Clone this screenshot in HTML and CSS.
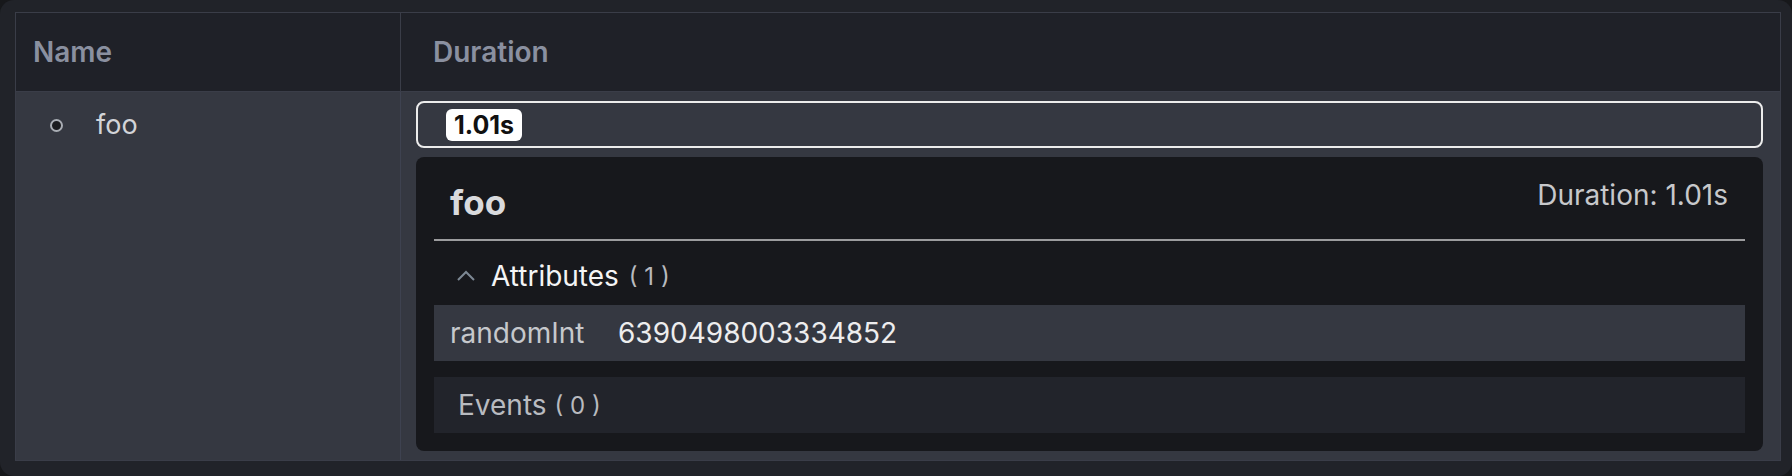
FILE: index.html
```html
<!DOCTYPE html>
<html>
<head>
<meta charset="utf-8">
<link rel="stylesheet" href="styles.css">
</head>
<body>
<div class="frame">
  <div class="table">
    <div class="thead">
      <div class="th th-name">Name</div>
      <div class="th th-dur">Duration</div>
    </div>
    <div class="trow">
      <div class="td td-name">
        <span class="dot"></span>
        <span class="span-name">foo</span>
      </div>
      <div class="td td-dur">
        <div class="bar">
          <span class="badge">1.01s</span>
        </div>
        <div class="panel">
          <div class="panel-head">
            <div class="panel-title">foo</div>
            <div class="panel-dur">Duration: 1.01s</div>
          </div>
          <div class="section-head">
            <svg class="caret" width="20" height="12" viewBox="0 0 20 12"><path d="M2 10 L10 2 L18 10" fill="none" stroke="#7d8894" stroke-width="2"/></svg>
            <span class="section-label">Attributes</span>
            <span class="count">( 1 )</span>
          </div>
          <div class="attr-row">
            <span class="attr-key">randomInt</span>
            <span class="attr-val">6390498003334852</span>
          </div>
          <div class="events-row">
            <span class="events-label">Events</span>
            <span class="count">( 0 )</span>
          </div>
        </div>
      </div>
    </div>
  </div>
</div>
</body>
</html>
```
FILE: styles.css
```css
* { box-sizing: border-box; }
html, body { margin: 0; padding: 0; }
body {
  background: #17181b;
  font-family: Inter, "Noto Sans", sans-serif;
  width: 1792px;
  height: 476px;
  overflow: hidden;
}
.frame {
  width: 1792px;
  height: 476px;
  background: #212329;
  border-radius: 14px;
  padding: 12px 11px 15px 15px;
}
.table {
  border: 1px solid #3a3d48;
  display: flex;
  flex-direction: column;
  height: 449px;
}
.thead {
  display: flex;
  height: 79px;
  background: #1f2128;
  border-bottom: 1px solid #3a3d48;
}
.th {
  display: flex;
  align-items: center;
  color: #8a90a0;
  font-weight: 600;
  font-size: 28px;
  padding-bottom: 1px;
}
.th-name {
  width: 385px;
  padding-left: 17px;
  border-right: 1px solid #3a3d48;
}
.th-dur {
  flex: 1;
  padding-left: 32px;
}
.trow {
  display: flex;
  flex: 1;
  background: #353841;
}
.td-name {
  width: 385px;
  border-right: 1px solid #3e4250;
  display: flex;
  align-items: flex-start;
  padding: 17px 0 0 34px;
  height: 100%;
}
.dot {
  width: 13px;
  height: 13px;
  border-radius: 50%;
  border: 2px solid #a9adb4;
  background: #1b1c20;
  margin-top: 10px;
  margin-right: 33px;
  flex: none;
}
.span-name {
  color: #d2d4d8;
  font-size: 27px;
  line-height: 32px;
}
.td-dur {
  flex: 1;
  padding: 9px 17px 9px 15px;
  display: flex;
  flex-direction: column;
  gap: 9px;
}
.bar {
  height: 47px;
  border: 2px solid #ececec;
  border-radius: 8px;
  display: flex;
  align-items: center;
  padding-left: 28px;
}
.badge {
  background: #ffffff;
  color: #111;
  font-weight: 700;
  font-size: 25px;
  height: 32px;
  line-height: 32px;
  padding: 0 8px;
  border-radius: 6px;
}
.panel {
  flex: 1;
  background: #17181c;
  border-radius: 8px;
  padding: 0 18px;
  display: flex;
  flex-direction: column;
}
.panel-head {
  display: flex;
  justify-content: space-between;
  align-items: flex-start;
  border-bottom: 2px solid #9c9c9e;
  height: 84px;
  padding: 0 17px 0 16px;
}
.panel-title {
  color: #d9dadd;
  font-weight: 700;
  font-size: 35px;
  margin-top: 24px;
  line-height: 42px;
}
.panel-dur {
  color: #c7c8cb;
  font-size: 28px;
  margin-top: 21px;
  line-height: 34px;
}
.section-head {
  display: flex;
  align-items: center;
  height: 64px;
  padding-left: 22px;
  padding-top: 6px;
}
.caret {
  margin-right: 15px;
}
.section-label {
  color: #f4f4f5;
  font-size: 28px;
  margin-right: 10px;
}
.count {
  color: #b8babf;
  font-size: 24px;
}
.attr-row {
  height: 56px;
  background: #353841;
  display: flex;
  align-items: center;
  padding-left: 16px;
}
.attr-key {
  color: #c6c8cc;
  font-size: 28px;
  width: 168px;
}
.attr-val {
  color: #ededee;
  font-size: 28px;
}
.events-row {
  margin-top: 16px;
  height: 56px;
  background: #22242b;
  display: flex;
  align-items: center;
  padding-left: 24px;
}
.events-label {
  color: #b9bbc0;
  font-size: 28px;
  margin-right: 8px;
}
```
